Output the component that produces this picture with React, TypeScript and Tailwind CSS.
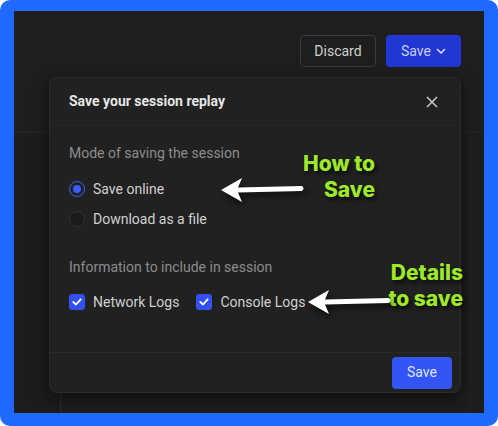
import React from "react";

function Arrow({ className }: { className?: string }) {
  return (
    <svg className={className} viewBox="0 0 86 28" width="86" height="28" style={{ filter: "drop-shadow(2px 4px 3px rgba(0,0,0,0.65))" }}>
      <path d="M1 14 L22 2 L18 11.5 L82 10 Q85 12.5 82 15 L18 16.5 L22 26 Z" fill="#ffffff" strokeLinejoin="round" />
    </svg>
  );
}

export default function App() {
  const ui = { fontFamily: "Roboto, 'Liberation Sans', sans-serif" };
  const anno = { fontFamily: "Inter, 'Open Sans', sans-serif", textShadow: "2px 3px 4px rgba(0,0,0,0.7)" };
  const check = (
    <svg width="10" height="8" viewBox="0 0 10 8"><path d="M1.3 4 L4 6.5 L8.7 1.3" stroke="#fff" strokeWidth="1.8" fill="none" strokeLinecap="round" strokeLinejoin="round" /></svg>
  );
  return (
    <div className="w-[498px] h-[426px] bg-white">
      <div className="w-[498px] h-[426px] bg-[#1f69ff] rounded-[10px] pt-[11px] pl-[14px] pr-[14px] pb-[13px]">
        <div className="relative w-full h-full bg-[#1b1b1b] overflow-hidden flex flex-col" style={ui}>
          <div className="h-[122px] bg-[#1e1e1e] border-b border-[#262626] flex items-start justify-end gap-[10px] pr-[23px] pt-[24px] shrink-0">
            <button className="h-[32px] w-[76px] rounded-[4px] border border-[#3a3a3a] bg-[#1e1e1e] text-[14px] text-[#cfcfcf]">Discard</button>
            <button className="h-[32px] w-[75px] rounded-[4px] bg-[#2236d4] text-[14px] text-[#c9d0ff] flex items-center justify-center gap-[5px]">
              Save
              <svg width="10" height="7" viewBox="0 0 10 7"><path d="M1.5 1.5 L5 5 L8.5 1.5" stroke="#d6dbff" strokeWidth="1.6" fill="none" strokeLinecap="round" strokeLinejoin="round" /></svg>
            </button>
          </div>
          <div className="flex-1 flex">
            <div className="w-[47px] border-r border-[#2c2c2c] bg-[#1c1c1c]" />
            <div className="flex-1 bg-[#1e1e1e]" />
            <div className="w-[14px] border-l border-[#262626] bg-[#1d1d1d]" />
          </div>

          {/* Modal */}
          <div className="absolute left-[35px] top-[66px] w-[412px] h-[316px] rounded-[8px] bg-[#212121] border border-[#2b2b2b] shadow-[0_6px_18px_rgba(0,0,0,0.55)] flex flex-col">
            <div className="h-[48px] flex items-center justify-between pl-[19px] pr-[22px] border-b border-[#262626] shrink-0">
              <span className="text-[14px] font-bold text-[#e6e6e6]">Save your session replay</span>
              <svg width="12" height="12" viewBox="0 0 12 12"><path d="M1 1 L11 11 M11 1 L1 11" stroke="#c8c8c8" strokeWidth="1.5" /></svg>
            </div>
            <div className="flex-1 pl-[19px] pt-[19px] flex flex-col">
              <div className="text-[14px] text-[#8c8c8c] leading-[16px]">Mode of saving the session</div>
              <div className="mt-[17px] flex items-center gap-[8px] h-[22px]">
                <span className="w-[16px] h-[16px] rounded-full border-[1.5px] border-[#3d5cff] flex items-center justify-center">
                  <span className="w-[8px] h-[8px] rounded-full bg-[#3d5cff]" />
                </span>
                <span className="text-[14px] text-[#cfcfcf]">Save online</span>
              </div>
              <div className="mt-[8px] flex items-center gap-[8px] h-[22px]">
                <span className="w-[16px] h-[16px] rounded-full border border-[#333333] bg-[#1b1b1b]" />
                <span className="text-[14px] text-[#cfcfcf]">Download as a file</span>
              </div>
              <div className="mt-[29px] text-[14px] text-[#8c8c8c] leading-[16px]">Information to include in session</div>
              <div className="mt-[17px] flex items-center h-[20px]">
                <span className="w-[16px] h-[16px] rounded-[3px] bg-[#3450f2] flex items-center justify-center">{check}</span>
                <span className="ml-[8px] text-[14px] text-[#cfcfcf]">Network Logs</span>
                <span className="ml-[17px] w-[16px] h-[16px] rounded-[3px] bg-[#3450f2] flex items-center justify-center">{check}</span>
                <span className="ml-[8px] text-[14px] text-[#cfcfcf]">Console Logs</span>
              </div>
            </div>
            <div className="h-[40px] border-t border-[#2a2a2a] flex items-center justify-end pr-[8px] shrink-0">
              <button className="h-[32px] w-[60px] rounded-[4px] bg-[#3355f5] text-[14px] text-[#dfe4ff]">Save</button>
            </div>
          </div>

          {/* Annotations */}
          <div className="absolute left-[251px] top-[140px] w-[110px] text-right text-[21px] font-extrabold leading-[26px] text-[#9ee82a]" style={anno}>
            How to<br />Save
          </div>
          <Arrow className="absolute left-[206px] top-[165px]" />
          <div className="absolute left-[339px] top-[249px] w-[110px] text-right text-[21px] font-extrabold leading-[26px] text-[#9ee82a]" style={anno}>
            Details<br />to save
          </div>
          <Arrow className="absolute left-[293px] top-[277px]" />
        </div>
      </div>
    </div>
  );
}
